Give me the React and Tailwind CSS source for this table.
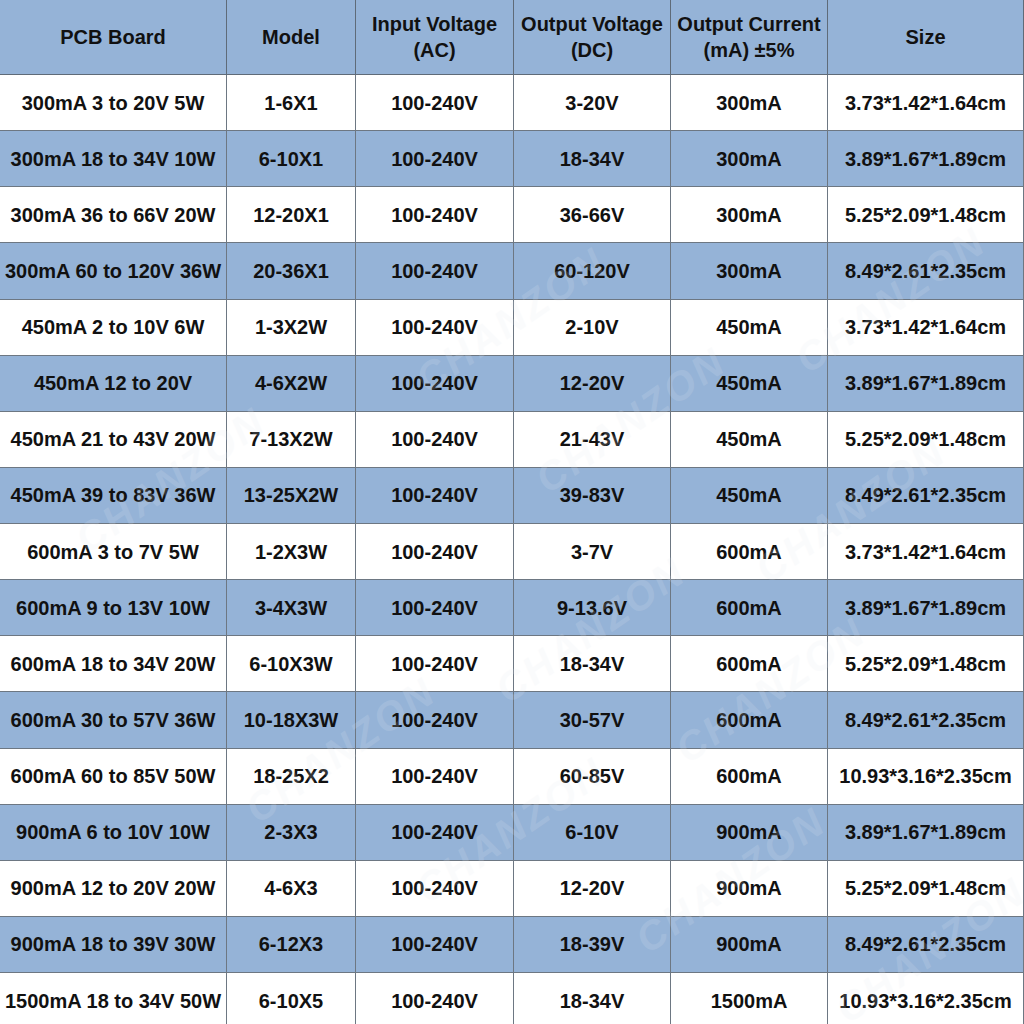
const rows = [
  ["300mA 3 to 20V 5W", "1-6X1", "100-240V", "3-20V", "300mA", "3.73*1.42*1.64cm"],
  ["300mA 18 to 34V 10W", "6-10X1", "100-240V", "18-34V", "300mA", "3.89*1.67*1.89cm"],
  ["300mA 36 to 66V 20W", "12-20X1", "100-240V", "36-66V", "300mA", "5.25*2.09*1.48cm"],
  ["300mA 60 to 120V 36W", "20-36X1", "100-240V", "60-120V", "300mA", "8.49*2.61*2.35cm"],
  ["450mA 2 to 10V 6W", "1-3X2W", "100-240V", "2-10V", "450mA", "3.73*1.42*1.64cm"],
  ["450mA 12 to 20V", "4-6X2W", "100-240V", "12-20V", "450mA", "3.89*1.67*1.89cm"],
  ["450mA 21 to 43V 20W", "7-13X2W", "100-240V", "21-43V", "450mA", "5.25*2.09*1.48cm"],
  ["450mA 39 to 83V 36W", "13-25X2W", "100-240V", "39-83V", "450mA", "8.49*2.61*2.35cm"],
  ["600mA 3 to 7V 5W", "1-2X3W", "100-240V", "3-7V", "600mA", "3.73*1.42*1.64cm"],
  ["600mA 9 to 13V 10W", "3-4X3W", "100-240V", "9-13.6V", "600mA", "3.89*1.67*1.89cm"],
  ["600mA 18 to 34V 20W", "6-10X3W", "100-240V", "18-34V", "600mA", "5.25*2.09*1.48cm"],
  ["600mA 30 to 57V 36W", "10-18X3W", "100-240V", "30-57V", "600mA", "8.49*2.61*2.35cm"],
  ["600mA 60 to 85V 50W", "18-25X2", "100-240V", "60-85V", "600mA", "10.93*3.16*2.35cm"],
  ["900mA 6 to 10V 10W", "2-3X3", "100-240V", "6-10V", "900mA", "3.89*1.67*1.89cm"],
  ["900mA 12 to 20V 20W", "4-6X3", "100-240V", "12-20V", "900mA", "5.25*2.09*1.48cm"],
  ["900mA 18 to 39V 30W", "6-12X3", "100-240V", "18-39V", "900mA", "8.49*2.61*2.35cm"],
  ["1500mA 18 to 34V 50W", "6-10X5", "100-240V", "18-34V", "1500mA", "10.93*3.16*2.35cm"],
];

const headers = [
  ["PCB Board"],
  ["Model"],
  ["Input Voltage", "(AC)"],
  ["Output Voltage", "(DC)"],
  ["Output Current", "(mA) ±5%"],
  ["Size"],
];

// faint diagonal watermarks
const marks = [
  [400, 290], [780, 270], [520, 390], [60, 450],
  [740, 480], [480, 600], [660, 660], [230, 720],
  [400, 800], [620, 850], [820, 920],
];

const App = () => {
  return (
    <div
      className="relative w-[1024px] h-[1024px] overflow-hidden bg-white text-[#111]"
      style={{ fontFamily: '"Liberation Sans", Arial, sans-serif' }}
    >
      <div className="grid grid-cols-[227px_129px_158px_157px_157px_196px] grid-rows-[75px_repeat(17,56.125px)] font-bold text-[20px]">
        {headers.map((h, i) => (
          <div
            key={i}
            className="flex flex-col items-center justify-center bg-[#95b3d7] border-r border-b border-[#5f6b78] leading-[26px] text-center"
          >
            {h.map((line) => (
              <span key={line}>{line}</span>
            ))}
          </div>
        ))}
        {rows.map((r, ri) =>
          r.map((c, ci) => (
            <div
              key={ri + "-" + ci}
              className={
                "flex items-center justify-center whitespace-nowrap border-r border-b border-[#6d7782] " +
                (ri % 2 === 1 ? "bg-[#95b3d7]" : "bg-white")
              }
            >
              {c}
            </div>
          ))
        )}
      </div>

      {marks.map(([x, y], i) => (
        <div
          key={i}
          className="pointer-events-none absolute text-[40px] font-bold italic tracking-[3px] text-[#e4e9f0] opacity-[0.16] -rotate-[35deg]"
          style={{ left: x, top: y }}
        >
          CHANZON
        </div>
      ))}
    </div>
  );
};

export default App;
